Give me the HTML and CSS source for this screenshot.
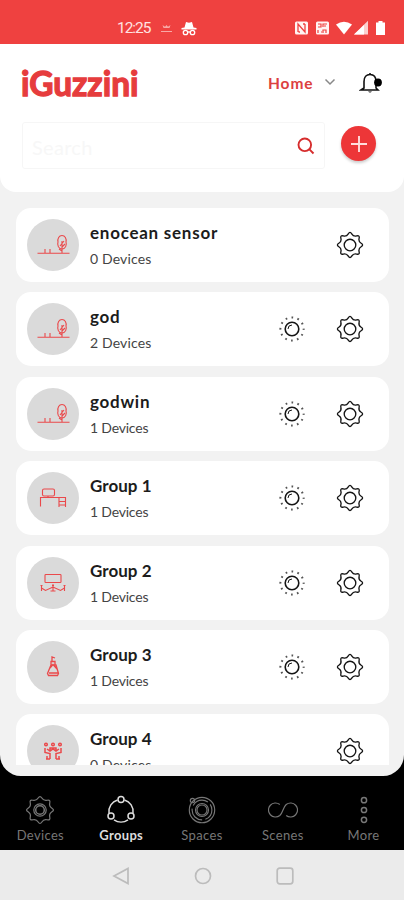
FILE: index.html
```html
<!DOCTYPE html>
<html lang="en">
<head>
<meta charset="utf-8">
<title>iGuzzini Groups</title>
<link rel="stylesheet" href="styles.css">
</head>
<body>
<svg class="defs" width="0" height="0">
  <symbol id="gear" viewBox="-14 -14 28 28"><path d="M11.15-1.72Q14 0 11.15 1.72Q8.3 3.45 9.1 6.67Q9.9 9.9 6.67 9.1Q3.45 8.3 1.72 11.15Q0 14-1.72 11.15Q-3.45 8.3-6.67 9.1Q-9.9 9.9-9.1 6.67Q-8.3 3.45-11.15 1.72Q-14 0-11.15-1.72Q-8.3-3.45-9.1-6.67Q-9.9-9.9-6.67-9.1Q-3.45-8.3-1.72-11.15Q0-14 1.72-11.15Q3.45-8.3 6.67-9.1Q9.9-9.9 9.1-6.67Q8.3-3.45 11.15-1.72Z"/><circle r="5.800"/></symbol>
  <symbol id="sun" viewBox="-14 -14 28 28"><circle r="6.800" stroke-width="1.600"/><path d="M-4 0A4 4 0 0 1 0-4" stroke-width="1"/><circle r="11.600" stroke="#555" stroke-width="2" stroke-dasharray="1.700 4.374" stroke-dashoffset=".85"/></symbol>
  <symbol id="outdoor" viewBox="0 0 52 52"><path d="M10.500 34.200H42.500M18 34v-4M23 34v-4M35 34V22M35 28l3-3M35 32l-3-2M33 27l4-5"/><path d="M35 16.500c3 0 4.700 3 4 6.500 1 3-.5 7-4 7s-5-4-4-7c-.7-3.500 1-6.500 4-6.500z"/></symbol>
  <symbol id="desk" viewBox="0 0 52 52"><rect x="15.500" y="17" width="12" height="7" rx="1.500"/><path d="M13.500 34.500V25.500H38.500V35M21 24v2M32 26v9M32 29.500h6.500M32 33h6.500"/></symbol>
  <symbol id="meeting" viewBox="0 0 52 52"><rect x="18" y="17.500" width="16" height="8" rx=".8"/><path d="M14.500 34v-5.500M37.500 34v-5.500M26 34.500v-6M14.500 31l4 2.500L26 30l7.500 3.500 4-2.500M23.500 34h5"/><path d="M14.500 28v1M26 27.500v1.500M37.500 28v1" stroke-width="2"/></symbol>
  <symbol id="bottle" viewBox="0 0 52 52"><path d="M24 24h5l2.500 8.500-1 2h-9l-1-2zM24 24v-3.500h4V24M25 20v-4l3 1M23 27l3-3.500 4 4.500M22 32h9" stroke-width="1.300"/></symbol>
  <symbol id="people" viewBox="0 0 52 52"><g stroke-width="1.500"><circle cx="19" cy="19.500" r="1.300"/><circle cx="26" cy="19.500" r="1.300"/><circle cx="33" cy="19.500" r="1.300"/><path d="M18 23v4.500l5 1V34M34 23v4.500l-5 1V34M20 34v-3M32 34v-3M20 24l3 2 3-2 3 2 3-2M23 25v-2h6v2M19 34h4M29 34h4"/></g></symbol>
</svg>
<div class="phone">
  <div class="status">
    <span class="clock">12:25</span>
    <svg class="status-left" viewBox="0 0 40 18"><path d="M4.500 6l1 3h6l1-3-2.500 1.800L8.500 6 7 7.800z" fill="#f8a9a6"/><path d="M3 12.500h11" stroke="#f8a9a6"/><path d="M26.500 8.500l1.500-5.500 3 .8 3-.8 1.500 5.500 3 .6v1.400H23.500V9.100z" fill="#fff"/><g fill="none" stroke="#fff" stroke-width="1.300"><circle cx="27.500" cy="13.500" r="2.200"/><circle cx="34.500" cy="13.500" r="2.200"/><path d="M29.500 13h3"/></g></svg>
    <svg class="status-right" viewBox="0 0 94 16"><rect x="1" y="1.500" width="13" height="13" rx="1.500" fill="#fff4f3"/><path d="M4 12V4l7 8V4M4.500 12H6M9 4h2" fill="none" stroke="#ef4140" stroke-width="1.300"/><rect x="22" y="1.500" width="13" height="13" rx="1.500" fill="#fff4f3"/><path d="M24 4h3v3h-3M29 7V4h4M30 6h2M24 10v3M27 12h1M29 13v-3h3v3" fill="none" stroke="#ef4140" stroke-width="1.200"/><path d="M42 4.500Q50 -1 58 4.500L50 14.500z" fill="#fff"/><path d="M60 14.500L74 .8V14.500z" fill="#fbd0cf"/><path d="M60 14.500L70 5v9.500z" fill="#fff"/><path d="M84.500 1h4v1.500h2.500v12.500h-9V2.500h2.500z" fill="#fff"/></svg>
  </div>
  <div class="screen">
    <header class="header">
      <div class="brand-row">
        <svg class="logo" viewBox="0 0 120 40"><text x="0" y="32.500" textLength="117.500" lengthAdjust="spacingAndGlyphs">iGuzzini</text></svg>
        <span class="home">Home</span>
        <svg class="chevron" viewBox="0 0 12 8"><path d="M1.500 1.500L6 6l4.500-4.500"/></svg>
        <svg class="bell" viewBox="0 0 24 24"><path d="M5 17V10.500C5 6 7.500 3.500 11 3.500s6 2.500 6 7V17l2 2H2zM11 3.500V2"/><path d="M9 20.500q2 2 4 0z"/><circle cx="19" cy="11.500" r="3.900"/></svg>
      </div>
      <div class="search-row">
        <div class="search"><span>Search</span><svg viewBox="0 0 18 18"><circle cx="7.800" cy="7.800" r="6.300"/><path d="M12.200 12.200l4.300 4.300"/></svg></div>
        <div class="add"><svg viewBox="0 0 18 18"><path d="M9 1v16M1 9h16"/></svg></div>
      </div>
    </header>
    <main class="list">
      <section class="card"><div class="avatar"><svg><use href="#outdoor"/></svg></div><div class="info"><h2>enocean sensor</h2><p>0 Devices</p></div><svg class="action"><use href="#gear"/></svg></section>
      <section class="card"><div class="avatar"><svg><use href="#outdoor"/></svg></div><div class="info"><h2>god</h2><p>2 Devices</p></div><svg class="action"><use href="#sun"/></svg><svg class="action"><use href="#gear"/></svg></section>
      <section class="card"><div class="avatar"><svg><use href="#outdoor"/></svg></div><div class="info"><h2>godwin</h2><p class="single">1 Devices</p></div><svg class="action"><use href="#sun"/></svg><svg class="action"><use href="#gear"/></svg></section>
      <section class="card"><div class="avatar"><svg><use href="#desk"/></svg></div><div class="info"><h2 class="group">Group 1</h2><p class="single">1 Devices</p></div><svg class="action"><use href="#sun"/></svg><svg class="action"><use href="#gear"/></svg></section>
      <section class="card"><div class="avatar"><svg><use href="#meeting"/></svg></div><div class="info"><h2 class="group">Group 2</h2><p class="single">1 Devices</p></div><svg class="action"><use href="#sun"/></svg><svg class="action"><use href="#gear"/></svg></section>
      <section class="card"><div class="avatar"><svg><use href="#bottle"/></svg></div><div class="info"><h2 class="group">Group 3</h2><p class="single">1 Devices</p></div><svg class="action"><use href="#sun"/></svg><svg class="action"><use href="#gear"/></svg></section>
      <section class="card"><div class="avatar"><svg><use href="#people"/></svg></div><div class="info"><h2 class="group">Group 4</h2><p>0 Devices</p></div><svg class="action"><use href="#gear"/></svg></section>
    </main>
  </div>
  <nav class="tabs">
    <div class="tab"><svg viewBox="-15 -15 30 30"><use href="#gear" x="-15" y="-15" width="30" height="30"/><circle r="4.300" stroke-width="1.500"/></svg><span>Devices</span></div>
    <div class="tab active"><svg viewBox="-15 -15 30 30"><path d="M3.500-10A12 12 0 0 1 12 3M7 9.800A12 12 0 0 1-7 9.800M-12 3A12 12 0 0 1-3.500-10"/><circle cy="-10.500" r="3"/><circle cx="-10" cy="6" r="3"/><circle cx="10" cy="6" r="3"/></svg><span>Groups</span></div>
    <div class="tab"><svg viewBox="-15 -15 30 30"><circle r="12.700"/><circle r="9.900" stroke-dasharray="17 3.300" stroke-dashoffset="5"/><circle r="6.500"/><circle r="5"/><circle cx="-9.500" cy="-9.500" r="2.200"/></svg><span>Spaces</span></div>
    <div class="tab"><svg viewBox="-15 -15 30 30"><path d="M-3.200 5.500A7 7 0 1 1-3.200-5.500M3.200 5.500A7 7 0 1 0 3.200-5.500C-.5-2 .5 2-3.200 5.500"/></svg><span>Scenes</span></div>
    <div class="tab"><svg viewBox="-15 -15 30 30"><g stroke-width="1.500"><circle cy="-9.800" r="2.600"/><circle r="2.600"/><circle cy="9.800" r="2.600"/></g></svg><span>More</span></div>
  </nav>
  <div class="system">
    <svg viewBox="0 0 18 18"><path d="M16 1.500V16.500L2 9z"/></svg>
    <svg viewBox="0 0 18 18"><circle cx="9" cy="9" r="7.500"/></svg>
    <svg viewBox="0 0 18 18"><rect x="1.200" y="1.200" width="15.600" height="15.600" rx="2.500"/></svg>
  </div>
</div>
</body>
</html>
```
FILE: styles.css
```css
* { box-sizing: border-box; }
body { margin: 0; background: #000; font-family: Lato, "Open Sans", sans-serif; }
h2, p { margin: 0; font-weight: 400; }
svg { display: block; flex: none; }
.defs { position: absolute; }
.phone { width: 404px; height: 900px; display: flex; flex-direction: column; overflow: hidden; }
.status { height: 44px; flex: none; background: #ef4140; display: flex; align-items: flex-start; padding: 19px 17px 0 117px; }
.clock { font: 15.500px/18px Roboto, sans-serif; color: #ffe3e2; letter-spacing: -1.050px; width: 41px; }
.status-left { width: 40px; height: 18px; }
.status-right { width: 94px; height: 16px; margin: 1px -1px 0 auto; }
.screen { height: 732px; flex: none; background: #f2f2f2; border-radius: 0 0 21px 21px; overflow: hidden; padding-bottom: 11px; display: flex; flex-direction: column; }
.header { height: 148px; flex: none; background: #fff; border-radius: 0 0 16px 16px; padding: 19px 20px 0 21px; }
.brand-row { height: 40px; display: flex; align-items: center; }
.logo { width: 120px; height: 40px; overflow: visible; }
.logo text { font: 700 34px Lato, sans-serif; fill: #e63c3d; stroke: #e63c3d; stroke-width: 1.300; }
.home { margin-left: 127px; width: 56px; color: #dc4040; font-size: 15.500px; font-weight: 700; letter-spacing: .9px; line-height: 32px; }
.chevron { width: 12px; height: 8px; margin-top: -3px; fill: none; stroke: #888; stroke-width: 1.500; }
.bell { width: 24px; height: 24px; margin-left: 23px; fill: none; stroke: #111; stroke-width: 1.600; }
.bell path + path, .bell circle { fill: #000; stroke: none; }
.search-row { display: flex; margin: 19px 0 0 1px; }
.search { width: 303px; height: 47px; border: 1px solid #f6f6f6; border-radius: 3px; display: flex; align-items: center; justify-content: space-between; padding: 0 9px; color: #f7f7f7; font-size: 20px; letter-spacing: .3px; }
.search span { margin-top: 3px; }
.search svg { width: 18px; height: 18px; fill: none; stroke: #d62d2d; stroke-width: 1.900; }
.add { width: 35px; height: 35px; margin: 4px 0 0 16px; border-radius: 50%; background: #ed3638; box-shadow: 0 2px 3px #ccc; display: grid; place-items: center; }
.add svg { width: 18px; height: 18px; stroke: #ffdddc; stroke-width: 1.900; }
.list { flex: 1; min-height: 0; overflow: hidden; padding: 16px 15px 0 16px; display: flex; flex-direction: column; gap: 10.400px; }
.card { height: 74px; flex: none; display: flex; align-items: center; gap: 30px; padding: 0 25.500px 0 11px; background: #fff; border-radius: 15px; }
.avatar { width: 52px; height: 52px; flex: none; border-radius: 50%; background: #dadada; margin-right: -19px; }
.avatar svg { width: 52px; height: 52px; fill: none; stroke: #ea494b; stroke-width: 1.100; }
.info { flex: 1; white-space: nowrap; padding-top: 1px; }
.info h2 { font-size: 17px; line-height: 24px; font-weight: 700; letter-spacing: .74px; color: #1c1c1c; }
.info .group { letter-spacing: .05px; }
.info p { margin-top: 3px; font-size: 14px; line-height: 22px; letter-spacing: .15px; color: #444; }
.info .single { letter-spacing: -.2px; }
.action { width: 28px; height: 28px; fill: none; stroke: #151515; stroke-width: 1.350; }
.tabs { height: 74px; flex: none; background: #000; display: flex; }
.tab { flex: 1; display: flex; flex-direction: column; align-items: center; padding-top: 19px; color: #777; font-size: 13px; line-height: 18px; letter-spacing: .35px; }
.tab svg { width: 30px; height: 30px; fill: none; stroke: #777; stroke-width: 1.150; }
.tab span { margin-top: 1px; }
.active { color: #ddd; font-weight: 700; }
.active svg { stroke: #ddd; stroke-width: 1.500; }
.system { height: 50px; flex: none; background: #ebebeb; display: flex; justify-content: center; gap: 64px; padding: 17px 0 0 1px; }
.system svg { width: 18px; height: 18px; fill: none; stroke: #bcbcbc; stroke-width: 1.700; }
```
